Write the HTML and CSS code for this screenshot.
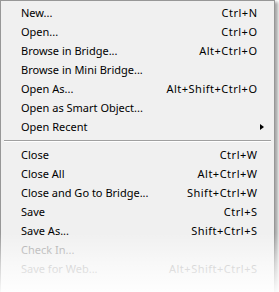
FILE: index.html
```html
<!DOCTYPE html>
<html>
<head>
<meta charset="utf-8">
<link rel="stylesheet" href="styles.css">
</head>
<body>
<div class="menu">
  <div class="item"><span>New...</span><span class="key">Ctrl+N</span></div>
  <div class="item"><span>Open...</span><span class="key">Ctrl+O</span></div>
  <div class="item"><span>Browse in Bridge...</span><span class="key">Alt+Ctrl+O</span></div>
  <div class="item"><span>Browse in Mini Bridge...</span><span></span></div>
  <div class="item"><span>Open As...</span><span class="key">Alt+Shift+Ctrl+O</span></div>
  <div class="item"><span>Open as Smart Object...</span><span></span></div>
  <div class="item"><span>Open Recent</span><span class="arrow"></span></div>
  <div class="sep"></div>
  <div class="item"><span>Close</span><span class="key">Ctrl+W</span></div>
  <div class="item"><span>Close All</span><span class="key">Alt+Ctrl+W</span></div>
  <div class="item"><span>Close and Go to Bridge...</span><span class="key">Shift+Ctrl+W</span></div>
  <div class="item"><span>Save</span><span class="key">Ctrl+S</span></div>
  <div class="item"><span>Save As...</span><span class="key">Shift+Ctrl+S</span></div>
  <div class="item disabled"><span>Check In...</span><span></span></div>
  <div class="item disabled"><span>Save for Web...</span><span class="key">Alt+Shift+Ctrl+S</span></div>
  <div class="fade"></div>
</div>
</body>
</html>
```
FILE: styles.css
```css
html, body {
  margin: 0;
  padding: 0;
  background: #ffffff;
  overflow: hidden;
}
.menu {
  position: relative;
  width: 273px;
  border: 1px solid #979797;
  border-bottom: none;
  background: #f0f0f0;
  padding-top: 2px;
  box-shadow: 3px 2px 3px rgba(0, 0, 0, 0.35);
  font-family: "Noto Sans", "Open Sans", sans-serif;
  font-size: 11px;
  color: #000;
  height: 300px;
}
.item {
  display: flex;
  justify-content: space-between;
  align-items: center;
  height: 19px;
  line-height: 19px;
  padding: 0 17px 0 20px;
  white-space: nowrap;
}
.key {
  letter-spacing: 0.5px;
  margin-right: -0.5px;
}
.item.disabled {
  color: #a4a4a4;
}
.arrow {
  width: 0;
  height: 0;
  border-top: 3.5px solid transparent;
  border-bottom: 3.5px solid transparent;
  border-left: 4px solid #000;
  margin-right: -7px;
}
.sep {
  height: 9px;
  display: flex;
  flex-direction: column;
  justify-content: center;
  padding: 0 3px;
}
.sep::before {
  content: "";
  display: block;
  height: 1px;
  background: #a0a0a0;
  border-bottom: 1px solid #ffffff;
}
.fade {
  position: absolute;
  left: -4px;
  right: -10px;
  top: 232px;
  height: 61px;
  background: linear-gradient(to bottom, rgba(255,255,255,0) 0%, rgba(255,255,255,0.55) 50%, rgba(255,255,255,0.97) 100%);
}
```
